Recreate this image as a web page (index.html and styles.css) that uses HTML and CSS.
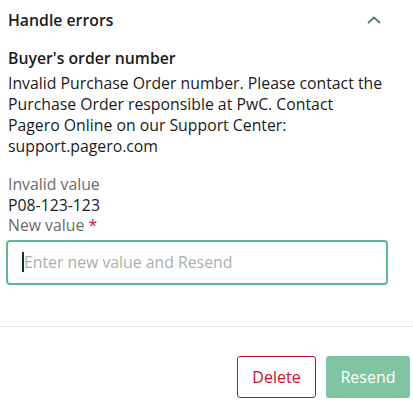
FILE: index.html
```html
<!DOCTYPE html>
<html lang="en">
<head>
    <meta charset="UTF-8">
    <meta name="viewport" content="width=device-width, initial-scale=1.0">
    <title>Handle errors</title>
    <link rel="stylesheet" href="styles.css">
</head>
<body>
    <div class="panel">
        <div class="panel-header">
            <div class="panel-title">Handle errors</div>
            <svg class="chevron" width="14" height="8" viewBox="0 0 14 8">
                <path d="M1 7 L7 1.5 L13 7" fill="none" stroke="#5b7a71" stroke-width="1.8"/>
            </svg>
        </div>
        <div class="panel-body">
            <div class="field-title">Buyer's order number</div>
            <p class="message">Invalid Purchase Order number. Please contact the Purchase Order responsible at PwC. Contact Pagero Online on our Support Center: support.pagero.com</p>

            <div class="label">Invalid value</div>
            <div class="value">P08-123-123</div>
            <div class="label">New value <span class="required">*</span></div>
            <div class="input-box">
                <span class="caret"></span>
                <span class="placeholder">Enter new value and Resend</span>
            </div>
        </div>
        <div class="divider"></div>
        <div class="actions">
            <button class="btn btn-delete">Delete</button>
            <button class="btn btn-resend">Resend</button>
        </div>
    </div>
</body>
</html>
```

FILE: styles.css
```css
body {
    margin: 0;
    font-family: 'Open Sans', 'Noto Sans', sans-serif;
    font-size: 15.8px;
    color: #1b1b1b;
    background: #fff;
}
.panel-header {
    display: flex;
    justify-content: space-between;
    align-items: center;
    padding: 8px 32px 8px 8px;
    height: 24px;
}
.panel-title {
    font-weight: 600;
    line-height: 24px;
}
.chevron {
    display: block;
}
.panel-body {
    padding: 6px 25px 0 8px;
}
.field-title {
    font-weight: 600;
    line-height: 24px;
}
.message {
    margin: 3px 0 17px;
    line-height: 21px;
}
.label {
    color: #6b6b6b;
    line-height: 20.5px;
}
.value {
    line-height: 20.5px;
}
.required {
    color: #c4174b;
}
.input-box {
    margin: 4px 0 0 -2px;
    height: 41px;
    border: 2px solid #5cbb8c;
    border-radius: 4px;
    display: flex;
    align-items: center;
    padding-left: 14px;
}
.caret {
    width: 2px;
    height: 20px;
    background: #14302a;
}
.placeholder {
    color: #a9b0ad;
}
.divider {
    margin-top: 41px;
    border-top: 1px solid #e6e6e6;
}
.actions {
    display: flex;
    justify-content: flex-end;
    gap: 10px;
    padding: 29px 3px 0 0;
}
.btn {
    font-family: inherit;
    font-size: 16px;
    height: 42px;
    border-radius: 3px;
    cursor: pointer;
}
.btn-delete {
    width: 79px;
    background: #fff;
    color: #c8102e;
    border: 1px solid #b5172f;
}
.btn-resend {
    width: 84px;
    background: #80c4a3;
    color: #fff;
    border: none;
}
```
